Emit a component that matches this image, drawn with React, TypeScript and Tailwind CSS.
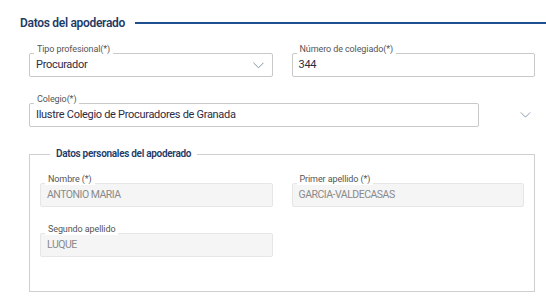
import React from 'react';

const font = { fontFamily: 'Roboto, "Noto Sans", sans-serif' };

const Chevron = ({ className = '' }: { className?: string }) => (
  <svg viewBox="0 0 12 7" className={className} fill="none" stroke="#7a8aa6" strokeWidth="1">
    <path d="M0.5 0.5 L6 6 L11.5 0.5" />
  </svg>
);

const Field = ({
  label,
  value,
  select = false,
  disabled = false,
}: {
  label: string;
  value: string;
  select?: boolean;
  disabled?: boolean;
}) => (
  <div
    className={`relative h-[24px] rounded-[2px] border flex items-center px-[6px] ${
      disabled ? 'bg-[#f5f5f5] border-[#e6e6e6]' : 'bg-white border-[#c9c9c9]'
    }`}
  >
    <span className="absolute -top-[10px] left-[4px] bg-white px-[3px] text-[9px] leading-[11px] text-[#555] tracking-[-0.1px]">
      {label}
    </span>
    <span
      className={`flex-1 ${
        disabled
          ? 'text-[10.5px] tracking-[-0.5px] text-[#8a8a8a]'
          : 'text-[11px] tracking-[-0.3px] text-[#2e2b45]'
      }`}
    >
      {value}
    </span>
    {select && <Chevron className="w-[11px] h-[7px] mr-[2px]" />}
  </div>
);

export default function App() {
  return (
    <div className="w-[546px] h-[300px] bg-white overflow-hidden pl-[20px] pr-[11px] pt-[15px]" style={font}>
      <div className="flex items-center gap-[10px] -mr-[11px]">
        <h2 className="text-[12px] font-semibold tracking-[-0.3px] text-[#1e3a66] whitespace-nowrap leading-[16px]">
          Datos del apoderado
        </h2>
        <div className="flex-1 h-[1.5px] bg-[#1f4f8f]" />
      </div>

      <div className="pl-[9px] pt-[22px]">
        <div className="grid grid-cols-2 gap-[19px]">
          <Field label="Tipo profesional(*)" value="Procurador" select />
          <Field label="Número de colegiado(*)" value="344" />
        </div>

        <div className="flex items-center mt-[26px]">
          <div className="w-[450px]">
            <Field label="Colegio(*)" value="Ilustre Colegio de Procuradores de Granada" />
          </div>
          <Chevron className="w-[11px] h-[6px] ml-[41px]" />
        </div>

        <fieldset className="mt-[20px] border border-[#cfcfcf] h-[145px] px-[10px] pt-[22px]">
          <legend className="ml-[10px] px-[6px] text-[10px] font-semibold tracking-[-0.3px] text-[#1e3a66] leading-[14px]">
            Datos personales del apoderado
          </legend>
          <div className="grid grid-cols-2 gap-x-[19px] gap-y-[26px]">
            <Field label="Nombre (*)" value="ANTONIO MARIA" disabled />
            <Field label="Primer apellido (*)" value="GARCIA-VALDECASAS" disabled />
            <Field label="Segundo apellido" value="LUQUE" disabled />
          </div>
        </fieldset>
      </div>
    </div>
  );
}
